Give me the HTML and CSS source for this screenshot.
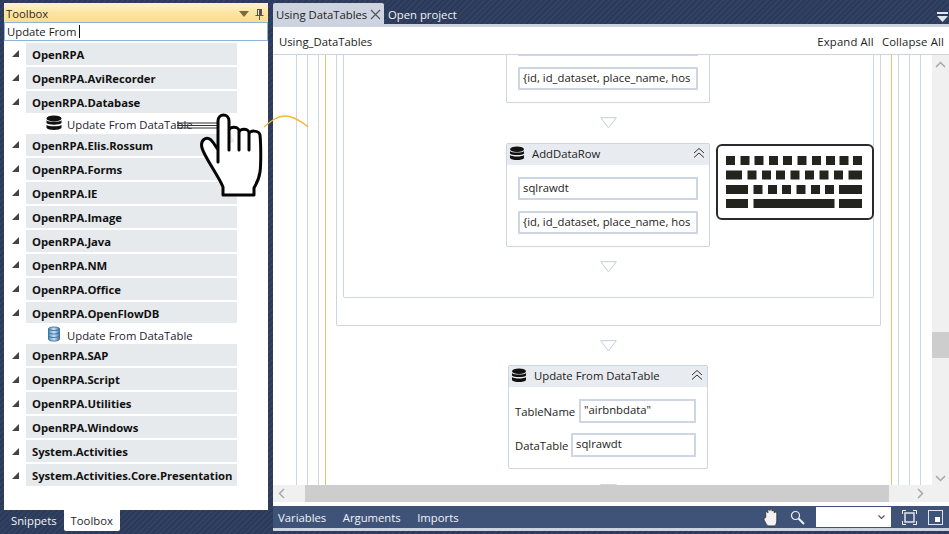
FILE: index.html
```html
<!DOCTYPE html>
<html lang="en">
<head>
<meta charset="utf-8">
<title>OpenRPA</title>
<link rel="stylesheet" href="styles.css">
</head>
<body>
<svg class="defs" width="0" height="0" aria-hidden="true">
  <symbol id="db" viewBox="0 0 16 16">
    <ellipse cx="8" cy="3.4" rx="7.5" ry="3" fill="#111"/>
    <path d="M.5 5.2C2 7.4 14 7.4 15.500 5.200V8C14 10.300 2 10.300 .5 8Z" fill="#111"/>
    <path d="M.5 9.700C2 11.800 14 11.800 15.500 9.700V12.800C14 15.800 2 15.800 .5 12.800Z" fill="#111"/>
  </symbol>
  <symbol id="chev" viewBox="0 0 12 12">
    <path d="M1 6 6 1.500 11 6M1 10.500 6 6 11 10.500" fill="none" stroke="#333" stroke-width="1"/>
  </symbol>
  <symbol id="tri" viewBox="0 0 7 7"><path d="M7 0V7H0Z" fill="#444"/></symbol>
  <symbol id="arrow" viewBox="0 0 17 12"><path d="M.7 .7H16.300L8.500 11Z" fill="#fff" stroke="#c5cedd"/></symbol>
</svg>

<main class="app">
  <aside class="left">
    <section class="toolbox">
      <header class="tb-head">
        <span>Toolbox</span>
        <span class="tb-tools">
          <svg width="10" height="6" viewBox="0 0 10 6"><path d="M0 0H10L5 6Z" fill="#7a6a3c"/></svg>
          <svg width="9" height="12" viewBox="0 0 9 12"><path d="M2 1H7V7H8.500V8H5V12H4V8H.5V7H2ZM3 2V7H4V2Z" fill="#555"/></svg>
        </span>
      </header>
      <div class="tb-search">Update From<span class="caret"></span></div>
      <ul class="tree">
        <li class="grp"><svg class="tri"><use href="#tri"/></svg><b>OpenRPA</b></li>
        <li class="grp"><svg class="tri"><use href="#tri"/></svg><b>OpenRPA.AviRecorder</b></li>
        <li class="grp"><svg class="tri"><use href="#tri"/></svg><b>OpenRPA.Database</b></li>
        <li class="item"><svg class="item-ico"><use href="#db"/></svg>Update From DataTable</li>
        <li class="grp"><svg class="tri"><use href="#tri"/></svg><b>OpenRPA.Elis.Rossum</b></li>
        <li class="grp"><svg class="tri"><use href="#tri"/></svg><b>OpenRPA.Forms</b></li>
        <li class="grp"><svg class="tri"><use href="#tri"/></svg><b>OpenRPA.IE</b></li>
        <li class="grp"><svg class="tri"><use href="#tri"/></svg><b>OpenRPA.Image</b></li>
        <li class="grp"><svg class="tri"><use href="#tri"/></svg><b>OpenRPA.Java</b></li>
        <li class="grp"><svg class="tri"><use href="#tri"/></svg><b>OpenRPA.NM</b></li>
        <li class="grp"><svg class="tri"><use href="#tri"/></svg><b>OpenRPA.Office</b></li>
        <li class="grp"><svg class="tri"><use href="#tri"/></svg><b>OpenRPA.OpenFlowDB</b></li>
        <li class="item"><svg class="item-ico" viewBox="0 0 16 16">
          <defs><linearGradient id="blue" x1="0" x2="1" y1="0" y2="0"><stop offset="0" stop-color="#4f8fc4"/><stop offset=".5" stop-color="#c9e3f6"/><stop offset="1" stop-color="#3b78ad"/></linearGradient></defs>
          <path d="M2.500 2.800C2.500 .4 13.500 .4 13.500 2.800V13.200C13.500 15.700 2.500 15.700 2.500 13.200Z" fill="url(#blue)" stroke="#2f5f88" stroke-width=".8"/>
          <path d="M2.500 3C4 5 12 5 13.500 3M2.500 6.500C4 8.500 12 8.500 13.500 6.500M2.500 10C4 12 12 12 13.500 10" fill="none" stroke="#2f5f88" stroke-width=".8"/>
        </svg>Update From DataTable</li>
        <li class="grp"><svg class="tri"><use href="#tri"/></svg><b>OpenRPA.SAP</b></li>
        <li class="grp"><svg class="tri"><use href="#tri"/></svg><b>OpenRPA.Script</b></li>
        <li class="grp"><svg class="tri"><use href="#tri"/></svg><b>OpenRPA.Utilities</b></li>
        <li class="grp"><svg class="tri"><use href="#tri"/></svg><b>OpenRPA.Windows</b></li>
        <li class="grp"><svg class="tri"><use href="#tri"/></svg><b>System.Activities</b></li>
        <li class="grp"><svg class="tri"><use href="#tri"/></svg><b>System.Activities.Core.Presentation</b></li>
      </ul>
    </section>
    <nav class="bottom-tabs">
      <span class="btab">Snippets</span>
      <span class="btab active">Toolbox</span>
    </nav>
  </aside>

  <section class="right">
    <nav class="doc-tabs">
      <span class="dtab active"><span class="dtab-label">Using DataTables</span>
        <svg width="11" height="11" viewBox="0 0 11 11"><path d="M1 1 10 10M10 1 1 10" stroke="#555" stroke-width="1.200"/></svg>
      </span>
      <span class="dtab">Open project</span>
      <svg class="overflow" width="11" height="10" viewBox="0 0 11 10"><path d="M0 0H11V2H0ZM0 4H11L5.500 10Z" fill="#dfe4ee"/></svg>
    </nav>
    <div class="doc">
      <header class="crumb">
        <span>Using_DataTables</span>
        <span class="crumb-actions"><span>Expand All</span><span>Collapse All</span></span>
      </header>
      <div class="workspace">
        <div class="canvas">
          <div class="nest n1"><div class="nest n2"><div class="nest n3"><div class="nest n4 orange"><div class="nest-box b1"><div class="nest-box b2">

            <article class="card first">
              <div class="field wide"></div>
              <div class="field wide"><span>{id, id_dataset, place_name, hos</span></div>
            </article>
            <svg class="arrow"><use href="#arrow"/></svg>
            <article class="card">
              <header class="card-head">
                <svg class="card-ico"><use href="#db"/></svg>
                <span class="card-title">AddDataRow</span>
                <svg class="card-chev"><use href="#chev"/></svg>
              </header>
              <div class="card-body">
                <div class="field wide"><span>sqlrawdt</span></div>
                <div class="field wide"><span>{id, id_dataset, place_name, hos</span></div>
              </div>
            </article>
            <svg class="arrow"><use href="#arrow"/></svg>

          </div></div>
            <svg class="arrow after"><use href="#arrow"/></svg>
            <article class="card update">
              <header class="card-head">
                <svg class="card-ico"><use href="#db"/></svg>
                <span class="card-title">Update From DataTable</span>
                <svg class="card-chev"><use href="#chev"/></svg>
              </header>
              <div class="card-body kv">
                <div class="kv-row"><label>TableName</label><div class="field short"><span>"airbnbdata"</span></div></div>
                <div class="kv-row"><label>DataTable</label><div class="field long"><span>sqlrawdt</span></div></div>
              </div>
            </article>
            <svg class="arrow end"><use href="#arrow"/></svg>
          </div></div></div></div>
        </div>
        <div class="vscroll">
          <svg width="11" height="7" viewBox="0 0 11 7"><path d="M1 6 5.500 1.500 10 6" fill="none" stroke="#a8a8a8" stroke-width="1.500"/></svg>
          <svg width="11" height="7" viewBox="0 0 11 7"><path d="M1 1 5.500 5.500 10 1" fill="none" stroke="#a8a8a8" stroke-width="1.500"/></svg>
          <i class="vthumb"></i>
        </div>
        <div class="hscroll">
          <svg width="7" height="11" viewBox="0 0 7 11"><path d="M6 1 1.500 5.500 6 10" fill="none" stroke="#a8a8a8" stroke-width="1.500"/></svg>
          <i class="hthumb"></i>
          <svg width="7" height="11" viewBox="0 0 7 11"><path d="M1 1 5.500 5.500 1 10" fill="none" stroke="#a8a8a8" stroke-width="1.500"/></svg>
        </div>
      </div>
    </div>
    <footer class="status">
      <span>Variables</span><span>Arguments</span><span>Imports</span>
      <span class="status-tools">
        <svg width="18" height="19" viewBox="0 0 16 18"><path d="M3 9V4.500C3 3 5 3 5 4.500V2.500C5 1 7 1 7 2.500V2C7 .7 9 .7 9 2V3C9 2 11 2 11 3.500V4.500C11.500 3.500 13.500 3.800 13.500 5V12C13.500 15 12 17 11 17H6C4 17 3 14 1.500 11.500C.7 10 2.500 8.500 3 9Z" fill="#f2f2f2" stroke="#333" stroke-width=".8"/></svg>
        <svg class="zoom" width="15" height="15" viewBox="0 0 15 15"><circle cx="5.500" cy="5.500" r="4" fill="none" stroke="#f2f2f2" stroke-width="1.200"/><path d="M8.500 8.500 14 14" stroke="#f2f2f2" stroke-width="2"/></svg>
        <span class="zoom-select"><svg width="7" height="5" viewBox="0 0 7 5"><path d="M.5 .5 3.500 3.500 6.500 .5" fill="none" stroke="#555" stroke-width="1.200"/></svg></span>
        <svg class="fit" width="15" height="15" viewBox="0 0 15 15"><path d="M.5 4V.5H4M11 .5H14.500V4M14.500 11V14.500H11M4 14.500H.5V11" fill="none" stroke="#f2f2f2"/><rect x="3" y="3" width="9" height="9" fill="none" stroke="#dfe4ee" stroke-width="1.500"/></svg>
        <svg class="overview" width="15" height="15" viewBox="0 0 15 15"><rect x=".5" y=".5" width="14" height="14" fill="none" stroke="#dfe4ee"/><rect x="7" y="7" width="5" height="5" fill="#fff"/></svg>
      </span>
    </footer>
  </section>

  <svg class="overlay arc" width="46" height="15" viewBox="0 0 46 15"><path d="M1 13C8 7 14 2 22 2C30 2 38 7 45 13" fill="none" stroke="#f4b73a" stroke-width="1.300"/></svg>
  <svg class="overlay keyboard" width="158" height="76" viewBox="0 0 158 76">
    <rect x="1" y="1" width="156" height="74" rx="5" fill="#fff" stroke="#2a2a28" stroke-width="2"/>
    <g fill="#24241f">
      <path d="M10 12h9v9h-9zM24.500 12h9v9h-9zM38.500 12h9v9h-9zM53 12h9v9h-9zM67 12h9v9h-9zM81.500 12h9v9h-9zM96 12h9v9h-9zM110 12h9v9h-9zM123.500 12h9v9h-9zM137 12h9v9h-9z"/>
      <path d="M10 26.500h16v9H10zM31.500 26.500h9v9h-9zM46 26.500h9v9h-9zM60 26.500h9v9h-9zM74.500 26.500h9v9h-9zM89 26.500h9v9h-9zM103.500 26.500h9v9h-9zM118 26.500h9v9h-9zM132.500 26.500h13.500v9h-13.500z"/>
      <path d="M10 41h22v9H10zM37.500 41h9v9h-9zM52 41h9v9h-9zM66 41h9v9h-9zM80.500 41h9v9h-9zM95 41h9v9h-9zM109 41h9v9h-9zM123 41h23v9h-23z"/>
      <path d="M10 55h22v9H10zM37.500 55h81v9h-81zM123 55h23v9h-23z"/>
    </g>
  </svg>
  <svg class="overlay hand" width="90" height="86" viewBox="176 112 90 86">
    <path d="M177 123H219M177 125.500H219M177 128H219" stroke="#333" stroke-width="1" fill="none"/>
    <path d="M218 162V121C218 113 229 113 229 121V150M229 131C229 126 239 126 239 131V150M239 133C239 128 249 128 249 133V150M249 134C249 130 259 130 260 135C261 145 261 165 260 172C259 180 255 186 254 188V195H223V187C218 175 205 158 202 148C200 140 206 136 211 140C214 143 216 147 218 150" fill="#fff" stroke="#050505" stroke-width="3" stroke-linejoin="round" stroke-linecap="round"/>
  </svg>
</main>
</body>
</html>
```

FILE: styles.css
```css
* { box-sizing: border-box; }
html, body { margin: 0; height: 100%; }
body {
  width: 949px;
  height: 534px;
  overflow: hidden;
  font: 11.300px "Open Sans", "Noto Sans", sans-serif;
  color: #1c1c22;
  background: #2c3b5c repeating-linear-gradient(135deg, #2b3a5a 0 2px, #31415f 2px 4px);
}
.defs { position: absolute; }
ul { list-style: none; margin: 0; padding: 0; }

.app { position: relative; display: flex; height: 534px; padding: 3px 0 0 4px; gap: 5px; }

/* left column */
.left { width: 264px; display: flex; flex-direction: column; }
.toolbox { height: 507px; background: #fff; display: flex; flex-direction: column; }
.tb-head {
  height: 19px; padding: 2px 4px 0 2px; display: flex; align-items: center; justify-content: space-between;
  background: linear-gradient(#fff3cd, #fde3a0 55%, #fcdc8f);
  border-radius: 2px 2px 0 0; color: #2b2b2b;
}
.tb-tools { display: flex; align-items: center; gap: 6px; }
.tb-search {
  height: 19px; line-height: 16px; padding-left: 2px; border: 1px solid #8fb4dc; display: flex; align-items: center;
}
.caret { display: inline-block; width: 1px; height: 13px; margin-left: 3px; background: #111; }
.tree { padding-top: 2px; }
.grp { display: flex; align-items: center; height: 21.960px; margin-bottom: 2px; }
.tri { width: 7px; height: 7px; margin: 0 7px 0 8px; flex: none; }
.grp b { flex: 0 0 211px; height: 100%; padding-left: 6px; line-height: 24px; background: #e7eaed; color: #111; letter-spacing: -.05px; }
.item { display: flex; align-items: center; height: 21px; margin-top: -2px; padding: 3px 0 0 42px; color: #26222e; }
.item-ico { width: 16px; height: 16px; margin-right: 5px; margin-top: -3px; }
.bottom-tabs { display: flex; }
.btab { height: 21px; line-height: 21px; padding: 0 7px; color: #f2f4f8; }
.btab.active { background: #fff; color: #1f2430; border-radius: 0 0 2px 2px; }

/* right column */
.right { flex: 1; display: flex; flex-direction: column; min-width: 0; }
.doc-tabs { height: 21px; display: flex; align-items: center; position: relative; flex: none; }
.dtab { height: 21px; padding: 2px 4px 0; color: #f2f4f8; display: flex; align-items: center; gap: 3px; white-space: nowrap; }
.dtab.active { width: 111px; padding: 2px 0 0 3px; background: #ced4df; color: #222; border-radius: 2px 2px 0 0; }
.overflow { position: absolute; right: 1px; top: 9px; }
.doc { background: #fff; height: 482px; display: flex; flex-direction: column; border-top: 3px solid #ced4df; padding-bottom: 4px; }
.crumb { height: 28px; flex: none; display: flex; align-items: center; justify-content: space-between; padding: 2px 5px 0 6px; border-bottom: 1px solid #ccd3e0; }
.crumb-actions { display: flex; gap: 8px; letter-spacing: .15px; }
.workspace { position: relative; flex: 1; min-height: 0; overflow: hidden; }
.canvas { height: 430px; overflow: hidden; padding-right: 17px; }
.nest { border: solid #cdd4e2; border-width: 0 1px; height: 100%; flex: none; }
.n1 { margin: 0 11px 0 23px; padding: 0 10px; }
.n2 { padding: 0 10px; }
.n3 { padding: 0 6px; }
.n4 { padding: 0 10px; height: 100%; }
.orange { border-color: #e8c273; }
.nest-box { border: 1px solid #cdd4e2; border-top: 0; border-radius: 0 0 2px 2px; display: flex; flex-direction: column; align-items: center; }
.b1 { padding: 0 6px 27px; height: 271px; }
.b2 { width: 100%; height: 244px; }

.card { width: 204px; flex: none; border: 1px solid #cdd4e2; border-radius: 2px; background: #fff; margin-right: 1px; }
.card.first { height: 73px; margin-top: -25px; border-top: 0; padding: 0 11px 12px; display: flex; flex-direction: column; justify-content: flex-end; }
.card-head { height: 21px; padding: 0 4px 3px 2px; display: flex; align-items: center; background: #e8ebef; color: #222; }
.card-ico { width: 16px; height: 15px; margin-right: 7px; }
.card-title { flex: 1; }
.card-chev { width: 12px; height: 12px; }
.card-body { padding: 12px 11px 12px; }
.field { height: 23px; border: 2px solid #ced5e3; padding: 0 3px; line-height: 18px; overflow: hidden; white-space: nowrap; flex: none; }
.field.wide { width: 180px; margin-bottom: 11px; }
.field.wide:last-child { margin-bottom: 0; }
.arrow { width: 17px; height: 12px; flex: none; margin-top: 14px; display: block; }
.arrow + .card { margin-top: 14px; }
.arrow.after { margin: 14px auto 0; }
.arrow.end { margin: 15px auto 0; }
.card.update { width: 200px; margin: 13px 0 0 172px; height: 104px; }
.kv { padding: 12px 11px 0 6px; }
.kv-row { display: flex; align-items: center; justify-content: space-between; margin-bottom: 10px; }
.kv-row .field { height: 24px; }
.kv-row label { color: #222; }
.field.short { width: 117px; }
.field.long { width: 125px; }

.vscroll { position: absolute; top: 0; right: 0; bottom: 17px; width: 17px; background: #f0f0f0; display: flex; flex-direction: column; justify-content: space-between; align-items: center; padding: 6px 0 3px; }
.vthumb { position: absolute; left: 0; right: 0; top: 277px; height: 26px; background: #cdcdcd; }
.hscroll { position: absolute; left: 0; right: 0; bottom: 0; height: 17px; background: #f0f0f0; display: flex; align-items: center; justify-content: space-between; padding: 0 25px 0 5px; }
.hthumb { position: absolute; left: 32px; width: 584px; top: 0; bottom: 0; background: #cdcdcd; }

.status {
  height: 25px; flex: none; display: flex; align-items: center; gap: 16.500px;
  padding: 0 0 3px 5px; color: #f1f3f7;
  background: linear-gradient(#3f5379, #3f5379 22px, #ced4df 22px);
}
.status-tools { margin-left: auto; display: flex; align-items: center; }
.zoom { margin-left: 10px; }
.zoom-select { width: 75px; height: 20px; margin-left: 11px; background: #fff; display: flex; align-items: center; justify-content: flex-end; padding-right: 6px; }
.fit { margin-left: 11px; }
.overview { margin: 0 6px 0 11px; }

/* overlays */
.overlay { position: absolute; }
.arc { left: 263px; top: 114px; }
.keyboard { left: 716px; top: 144px; }
.hand { left: 176px; top: 112px; }
```
